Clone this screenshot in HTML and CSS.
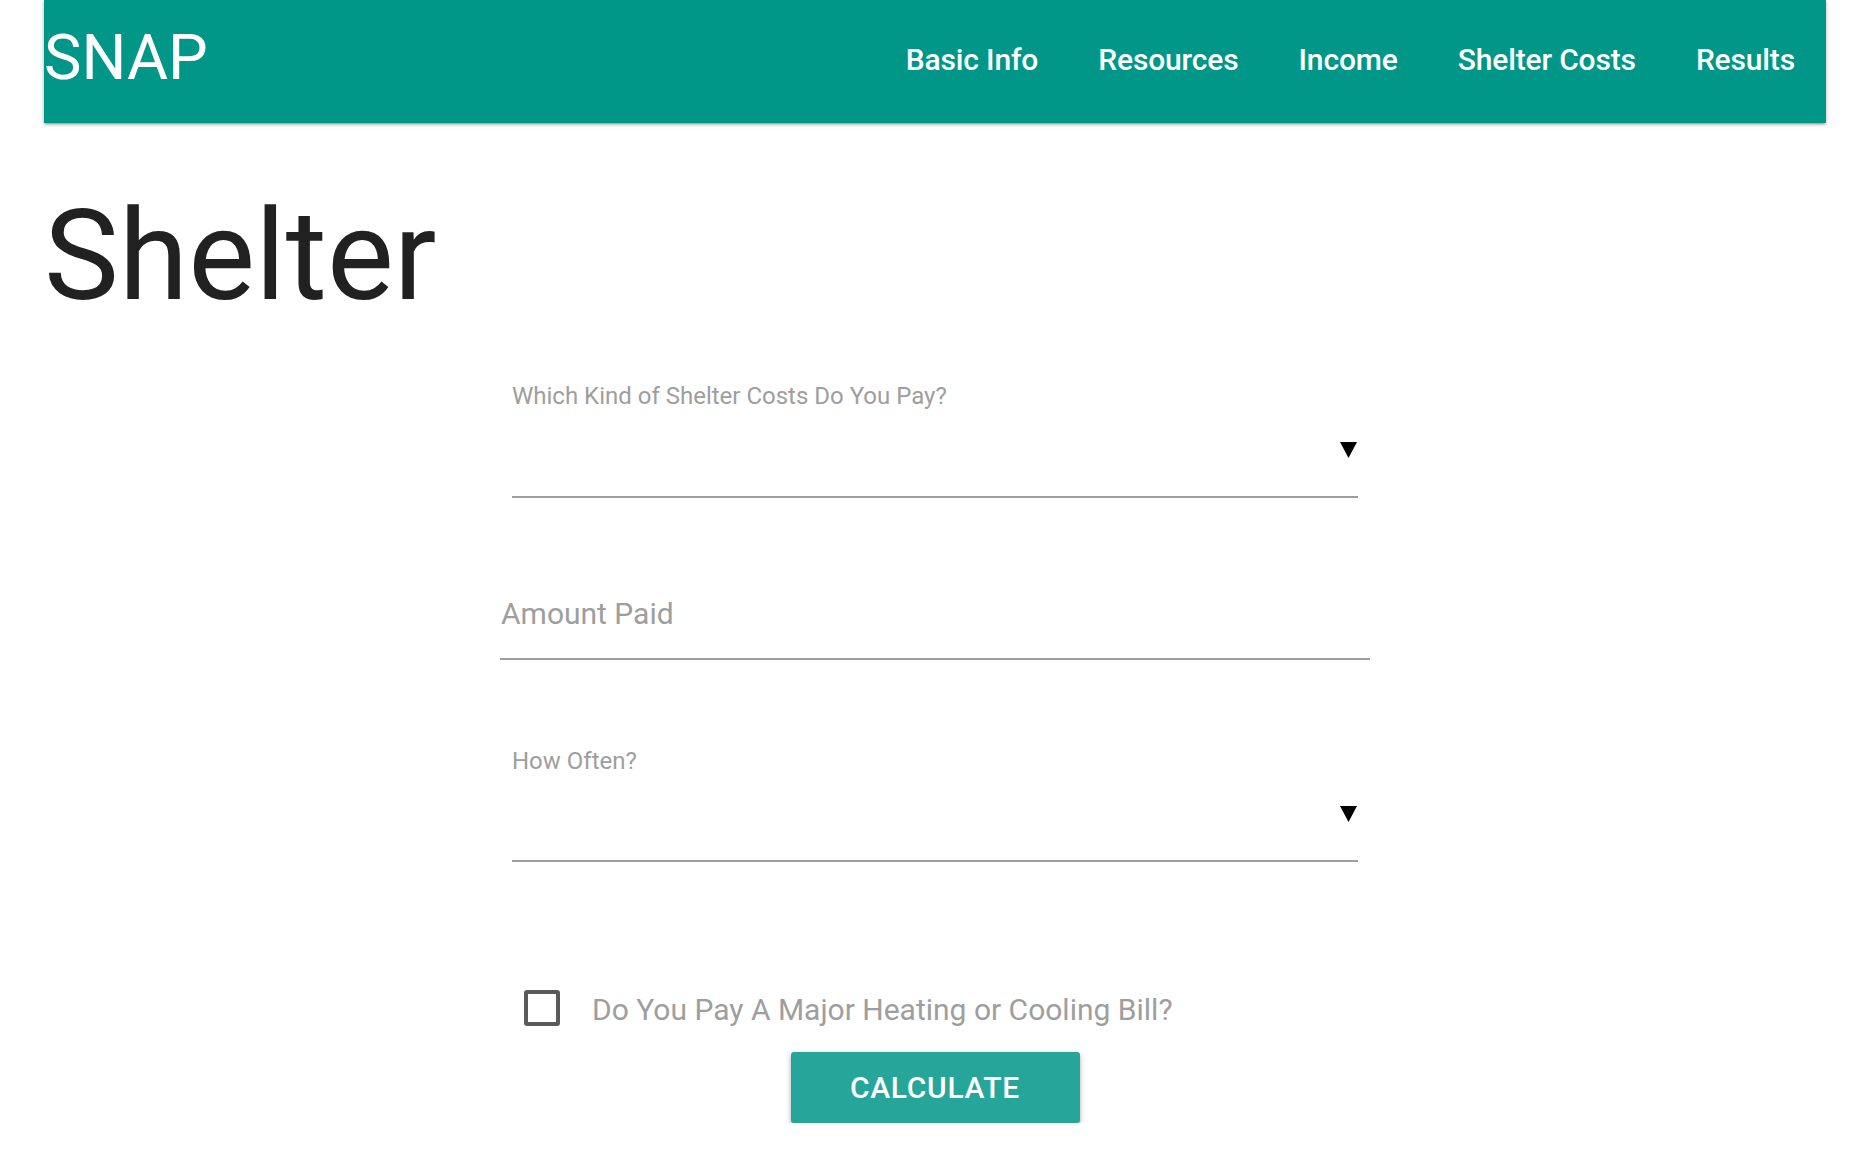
FILE: index.html
```html
<!DOCTYPE html>
<html lang="en">
<head>
<meta charset="utf-8">
<title>SNAP - Shelter</title>
<link rel="stylesheet" href="styles.css">
</head>
<body>
<div class="page">
  <header class="topbar">
    <div class="brand">SNAP</div>
    <nav class="nav">
      <a class="nav-link" href="#">Basic Info</a>
      <a class="nav-link" href="#">Resources</a>
      <a class="nav-link" href="#">Income</a>
      <a class="nav-link" href="#">Shelter Costs</a>
      <a class="nav-link" href="#">Results</a>
    </nav>
  </header>

  <h1 class="title">Shelter</h1>

  <form class="form">
    <div class="field field-first">
      <div class="field-label">Which Kind of Shelter Costs Do You Pay?</div>
      <div class="select select-first">
        <svg class="caret" width="17" height="16" viewBox="0 0 17 16"><polygon points="0,0 17,0 8.5,16" fill="#000"/></svg>
      </div>
    </div>

    <div class="input-field">
      <span class="placeholder">Amount Paid</span>
    </div>

    <div class="field field-second">
      <div class="field-label">How Often?</div>
      <div class="select select-second">
        <svg class="caret" width="17" height="16" viewBox="0 0 17 16"><polygon points="0,0 17,0 8.5,16" fill="#000"/></svg>
      </div>
    </div>

    <label class="check-row">
      <span class="checkbox"></span>
      <span class="check-text">Do You Pay A Major Heating or Cooling Bill?</span>
    </label>

    <div class="actions">
      <button type="button" class="btn">CALCULATE</button>
    </div>
  </form>
</div>
</body>
</html>
```

FILE: styles.css
```css
html, body {
  margin: 0;
  padding: 0;
  background: #ffffff;
}

body {
  font-family: Roboto, "Noto Sans", "Liberation Sans", sans-serif;
  color: #212121;
}

.page {
  margin: 0 40px 0 44px;
}

.topbar {
  height: 123px;
  background: #009688;
  display: flex;
  align-items: center;
  justify-content: space-between;
  box-shadow: 0 2px 2px 0 rgba(0,0,0,0.14), 0 3px 1px -2px rgba(0,0,0,0.12), 0 1px 5px 0 rgba(0,0,0,0.2);
}

.brand {
  font-size: 63px;
  line-height: 1;
  color: #ffffff;
  font-weight: 400;
  padding-bottom: 8px;
}

.nav {
  display: flex;
  align-items: center;
  padding-right: 1px;
  padding-bottom: 4px;
}

.nav-link {
  color: #ffffff;
  text-decoration: none;
  font-size: 30px;
  font-weight: 500;
  line-height: 1;
  padding: 0 30px;
  letter-spacing: -0.15px;
}

.title {
  margin: 58px 0 0 0;
  font-size: 126px;
  line-height: 151px;
  font-weight: 400;
  color: #212121;
}

.form {
  width: 870px;
  margin: 0 auto;
}

.field {
  margin: 0 12px;
}

.field-first {
  margin-top: 51px;
}

.field-label {
  font-size: 24px;
  line-height: 26px;
  color: #9e9e9e;
}

.select {
  display: flex;
  justify-content: flex-end;
  align-items: flex-start;
  border-bottom: 2px solid #9e9e9e;
  box-sizing: content-box;
}

.select-first {
  height: 54px;
  padding-top: 33px;
}

.select-second {
  height: 54px;
  padding-top: 32px;
}

.caret {
  display: block;
  margin-right: 1px;
}

.input-field {
  margin-top: 98px;
  height: 36px;
  padding-bottom: 26px;
  border-bottom: 2px solid #9e9e9e;
}

.placeholder {
  display: block;
  font-size: 30px;
  line-height: 36px;
  color: #9e9e9e;
  padding-left: 1px;
}

.field-second {
  margin-top: 88px;
}

.check-row {
  display: flex;
  align-items: center;
  margin-top: 128px;
  padding-left: 24px;
  height: 36px;
}

.checkbox {
  width: 36px;
  height: 36px;
  box-sizing: border-box;
  border: 4px solid #5a5a5a;
  border-radius: 3px;
  flex: none;
}

.check-text {
  margin-left: 32px;
  font-size: 30px;
  line-height: 36px;
  color: #9e9e9e;
  padding-top: 3px;
}

.actions {
  display: flex;
  justify-content: center;
  margin-top: 26px;
}

.btn {
  width: 289px;
  height: 71px;
  border: none;
  border-radius: 3px;
  background: #26a69a;
  color: #ffffff;
  font-family: Roboto, "Noto Sans", "Liberation Sans", sans-serif;
  font-size: 30px;
  font-weight: 500;
  letter-spacing: 0.7px;
  line-height: 71px;
  padding: 0;
  box-shadow: 0 3px 3px 0 rgba(0,0,0,0.16), 0 3px 1px -2px rgba(0,0,0,0.12), 0 2px 6px 0 rgba(0,0,0,0.22);
  cursor: pointer;
}
```
